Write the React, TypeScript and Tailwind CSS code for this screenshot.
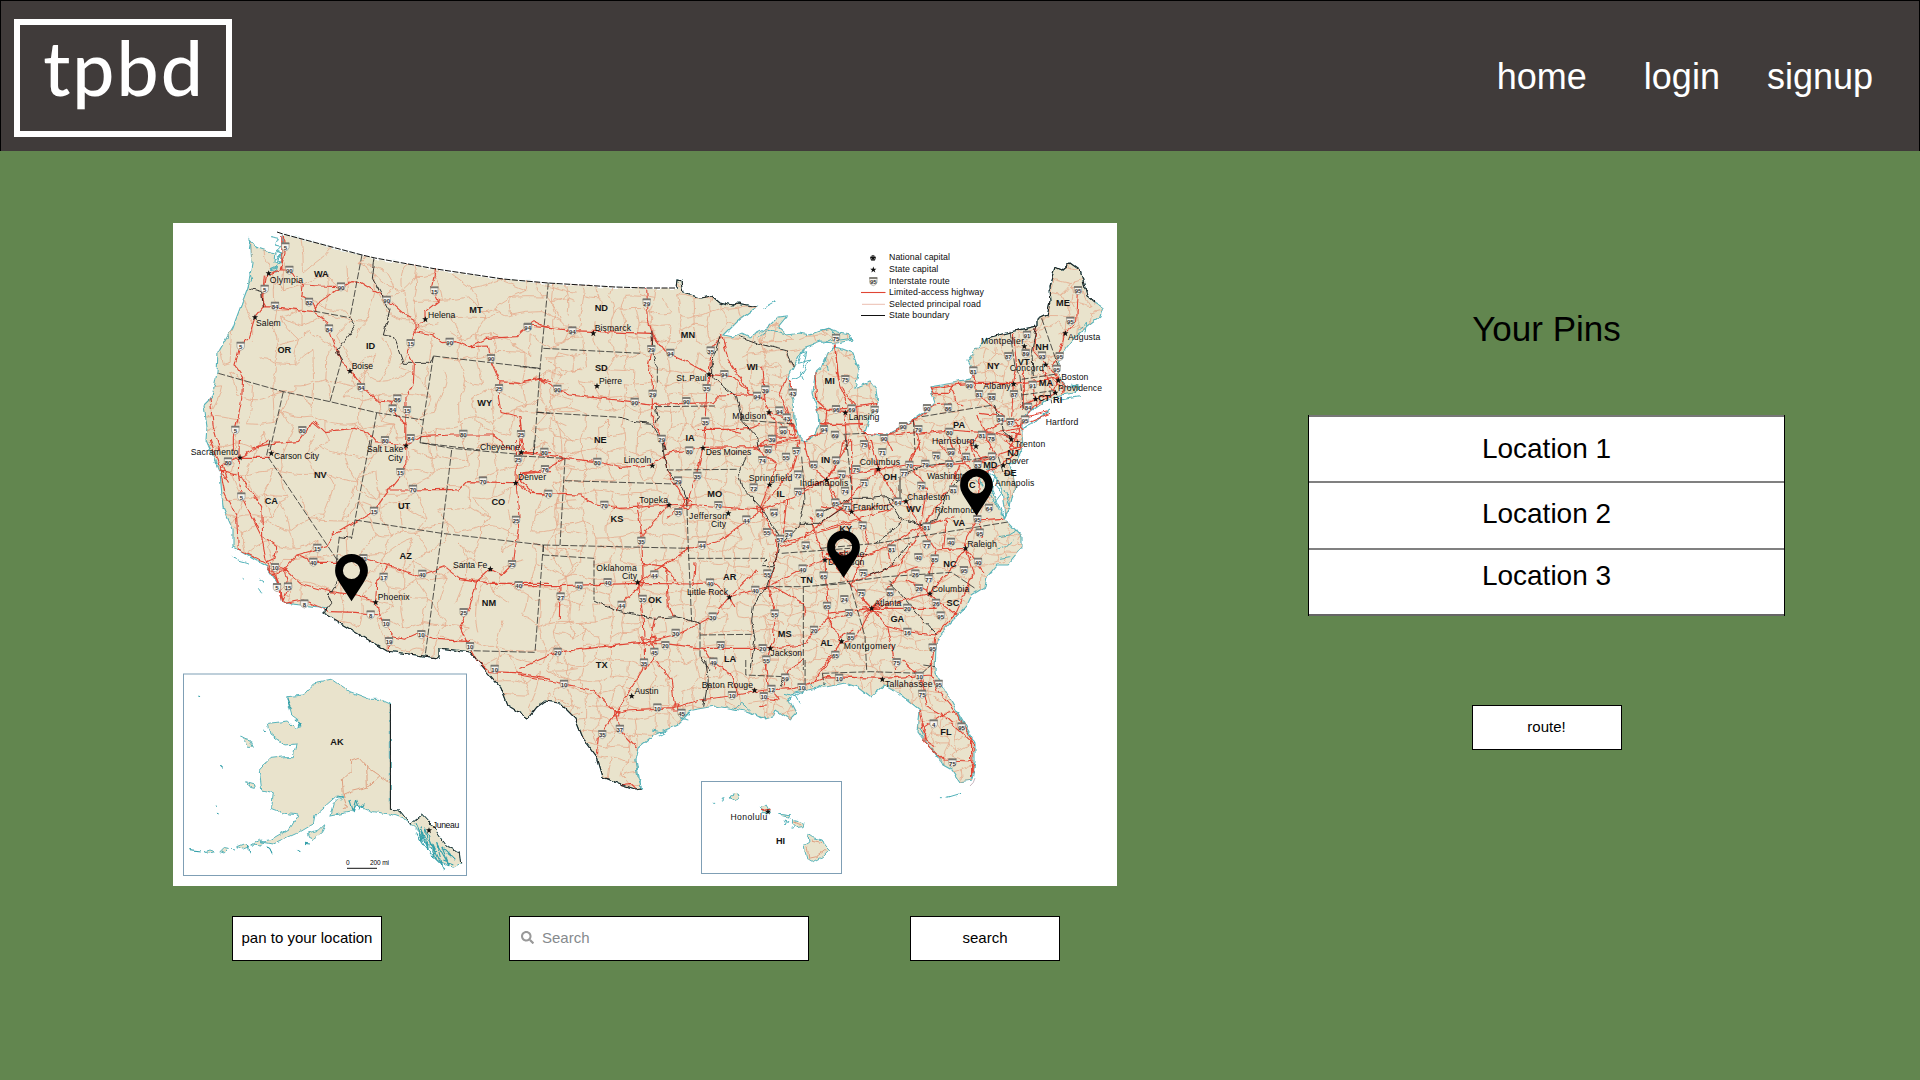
import React from "react";
import { FaSearch } from "react-icons/fa";

type Tile = { x: number; y: number; sx: number };

// The map is drawn in tiles; each has its own origin and horizontal scale.
const tiles: Record<string, Tile> = {
  A: { x: 170, y: 220, sx: 3 },
  B: { x: 520, y: 220, sx: 3 },
  C: { x: 820, y: 220, sx: 3 },
  D: { x: 170, y: 440, sx: 3 },
  E: { x: 520, y: 440, sx: 3 },
  F: { x: 820, y: 440, sx: 3 },
  G: { x: 170, y: 660, sx: 3 },
  H: { x: 520, y: 660, sx: 2.6133 },
};

const px = (t: string, x: number) => tiles[t].x + x / tiles[t].sx;
const py = (t: string, y: number) => tiles[t].y + y / 3;

const land =
  "M250,239L258,248 270,252 276,253 275,263 280,262 282,250 283,234 362,255 375,258 436,269 503,279 548,283 615,287 647,288 676,288 677,280 681,281 683,293 700,298 712,296 720,303 732,306 738,303 758,307 750,312 737,322 724,335 733,337 742,333 750,337 767,328 778,317 787,316 778,327 787,335 800,333 810,335 828,328 840,333 850,335 852,340 837,343 820,342 803,348 797,360 788,378 793,400 794,420 798,435 803,441 813,438 819,425 818,413 813,393 815,373 822,367 828,353 833,347 840,348 853,353 859,370 855,388 862,385 870,382 876,390 878,403 870,417 867,427 865,433 883,437 900,428 913,420 927,410 935,402 930,387 953,383 970,380 975,373 968,360 975,350 987,338 1010,332 1037,326 1037,320 1047,315 1050,303 1049,287 1055,267 1062,270 1070,263 1080,270 1087,295 1095,302 1103,307 1100,317 1087,327 1077,335 1067,347 1060,357 1057,368 1060,378 1067,387 1077,385 1075,393 1060,395 1047,400 1033,410 1022,418 1022,433 1023,447 1017,460 1008,465 1013,473 1015,487 1010,507 1005,517 1002,490 995,477 993,470 989,469 992,490 1000,513 1008,522 1022,537 1022,548 1008,565 997,565 987,577 985,587 972,595 967,605 953,620 942,632 936,645 935,673 949,697 962,720 975,742 975,763 972,780 960,782 952,770 943,765 935,753 926,743 918,732 920,710 910,702 897,692 884,685 870,697 857,687 845,683 826,687 811,689 796,693 788,698 796,713 790,719 776,710 773,717 763,719 750,712 734,709 715,706 692,710 677,725 654,735 639,747 636,760 641,788 635,789 620,784 603,777 597,757 583,738 575,718 560,703 545,701 537,707 528,718 507,705 500,687 477,660 470,652 439,648 439,658 387,651 323,613 328,608 283,603 280,587 267,567 238,550 233,547 233,530 223,507 220,473 206,440 207,427 204,405 212,397 217,373 218,353 233,327 248,287 252,263Z";

const borderNorth =
  "M277,232L283,234 362,255 375,258 436,269 503,279 548,283 615,287 647,288 676,288";
const borderLakes = "M676,288L677,280 681,281 683,293 700,298 712,296 720,303 732,306 738,303 758,307";
const borderEast =
  "M987,338L1010,332 1037,326 1037,320 1047,315 1050,303 1049,287 1055,267 1062,270 1070,263 1080,270 1087,295 1095,302";
const borderSouth =
  "M641,788L635,789 620,784 603,777 597,757 583,738 575,718 560,703 545,701 537,707 528,718 507,705 500,687 477,660 470,652 439,648 439,658 387,651 323,613 328,608";

const highways: Record<string, string> = {
  A: "M340,45L345,100 330,150 290,165 283,205 280,260 255,292 235,355 208,385 195,435 218,470 215,540 203,600 190,650 190,690M330,150L360,150 375,175 400,195 450,198 515,200 545,185 570,187 650,235 700,280 735,298 735,335 790,345 815,368 860,365 895,380 955,378 965,430 990,485 1050,490 1105,478 1140,485M400,195L395,230 430,250 440,275M515,200L450,245 430,275M280,260L330,262 430,275 470,305 490,365 515,430 540,452 575,500 620,540 680,545M660,545L680,590 710,615M797,148L785,200 805,243 765,275 765,298 732,335 712,395 733,435 730,490 708,530 707,690M895,380L950,355 1040,350 1075,315 1140,322M990,485L985,530 993,577 1050,590 1055,640 1050,690M245,685L310,670 385,665 430,605 465,635 550,625 590,635 615,665 707,675 750,650 850,645 970,645 1020,690M120,535L130,620 150,690M335,45L336,150M283,170L277,240 288,262",
  B: "M0,335L45,305 75,320 150,332 395,340 435,395 500,425 567,463 640,470 690,520 735,540 747,577 790,590 830,640M380,204L385,300 400,345 385,440 397,490 397,600 430,660 435,690M0,488L60,475 100,505 150,525 340,545 400,553 580,548 600,525 720,520M605,348L575,385 567,463 560,520 550,690M605,345L625,420 690,520M725,440L735,540M800,470L780,520 800,580 830,640M805,480L822,520M530,628L620,628 660,640M835,650L720,680M740,577L768,600 768,690M885,460L890,540 920,570 915,630 860,660M943,375L960,500 985,560M890,570L985,565M895,610L990,615M0,600L10,690M855,665L855,690M620,628L690,622 720,610M780,610L825,650M800,560L825,650M700,688L760,650 830,655",
  C: "M45,370L55,480 75,520 110,560 175,550M0,565L75,575 110,560M75,578L80,690M110,560L115,620 135,640M0,615L130,610M135,640L190,645 290,635M190,655L300,590 340,555 390,550M330,505L400,495 450,490 580,490 630,485 700,475 715,480M460,455L470,520 555,590M395,500L410,550 430,555M580,340L590,440 580,490 575,590M650,320L640,390 680,435 710,470M775,215L770,300 735,340 720,390 700,440 715,480 700,520 640,560 600,620 570,690M610,450L610,570M555,590L480,580M290,640L390,630 520,640 600,625M440,690L480,640 560,600M520,640L575,655M330,500L340,520 385,520 400,495M560,610L620,590 680,575M580,620L640,600 690,580M605,600L590,650 600,690M640,500L650,560M670,450L690,500 710,520M190,640L215,690M135,645L150,690M280,600L300,690M380,630L400,690M470,585L500,640 510,690M700,460L740,500M690,470L720,500 730,520M600,560L640,540 700,520M580,600L610,630M560,640L600,640",
  D: "M208,0L205,100 215,170 275,290 290,370 320,420 335,470 340,490M145,90L200,105M210,105L240,150 275,200 278,290 320,320 315,355 290,365M150,90L165,160 200,230 205,330 290,372M210,52L150,80M210,52L300,0M345,385L380,345 470,320 490,285 550,250 610,215 650,160 690,110 708,70 707,20M650,150L720,150 830,148 865,150 890,125 1040,128 1085,160 1140,163M380,345L430,367 500,367 580,355 660,378 745,408 825,380 870,415 960,430 1140,430M345,385L390,430 480,455 560,465 617,487 635,540 670,590 700,598 740,580 800,598 900,605M340,490L400,480 480,515 560,517 630,525M617,487L620,430 655,380M655,590L655,632M1040,0L1038,128 1048,240 1030,370 995,405 960,387 920,425 900,500 870,560 890,605 920,660 950,690M1040,128L1060,100 1140,95M1055,38L1140,38M305,390L345,390M340,380L355,440 340,480M120,0L150,85 175,130 160,75M490,270L490,290M290,365L350,390 310,405 290,380M305,375L330,440 340,485M210,52L300,52",
  E: "M0,100L70,90 135,55 230,65 300,82 395,75 440,40 505,30 550,22 700,20 840,0M0,38L135,55M0,120L45,160 180,165 220,190 300,205 445,195 500,192 720,210 800,180 920,120 990,110M550,22L530,100 500,190 440,235M350,190L365,280M445,195L365,285 370,430 300,495 290,520M355,430L370,540 375,690M355,430L400,395 510,325 600,300 720,215M0,437L120,437 355,430 515,432 580,428 628,470 745,440 850,385 915,360 985,330M628,470L580,530 480,580 385,605M0,685L110,637 230,622 385,605 550,625 750,625 850,615 880,580 925,535 990,525M390,600L410,640 375,690M390,600L405,530M120,437L118,540M745,440L765,520 760,600 750,625 735,690M720,210L770,290 770,350 745,440M840,0L815,90 720,210M700,20L770,70 750,130 720,205M920,120L870,80 850,0M920,120L945,190 990,230M920,120L970,40 990,0M435,380L450,400 475,430M440,390L445,500 460,530M525,370L520,440M790,310L850,290 990,250M870,230L900,320 915,360 920,480 925,535 965,605 910,690M760,440L850,490 855,530M435,40L440,90 500,190M550,625L590,690M780,320L830,305 950,215 990,180M628,470L645,505M628,470L710,390M365,370L440,380M365,600L410,590 390,620 360,590M490,180L515,185 512,205 492,205ZM710,202L735,205 730,218 712,216ZM800,180L790,280M835,150L920,120",
  F: "M20,120L100,100 175,88 260,75 320,80 430,70M175,88L110,150 50,215M175,88L150,0M175,88L215,150 235,185M260,75L300,0M95,215L235,185 260,185 300,260M300,0L270,70 320,150 300,260 350,330 330,390 320,460 410,525M430,70L530,45 610,20M430,70L480,110 470,240 440,290 435,325 400,380 330,460 155,505M300,260L200,320 130,350 20,340M300,260L400,230M420,75L390,140 330,230 240,370 90,430M15,345L90,430 155,505 20,520M155,505L110,590 65,605 0,690M155,505L200,560 230,690M155,505L350,505M330,460L260,420M200,560L260,575 345,585M435,325L495,400M435,325L460,400 400,530 345,585 335,690M350,330L435,325M25,535L65,605M470,240L550,235M95,215L130,250 145,310 95,430M95,0L95,215M500,0L530,45M480,110L560,60 610,20M410,0L430,70M480,240L485,290M0,200L95,215M0,270L120,235 220,205M20,120L60,190 95,215M20,120L60,50 70,0M350,0L400,60M440,0L490,60M120,470L155,505 190,470M130,520L180,490M130,500L185,520M60,590L100,570M200,450L240,400 290,380M450,0L470,70 530,50M380,240L370,330M200,320L215,380 240,370M560,0L590,30",
  G: "M920,0L960,35 1035,38 1140,55",
  H: "M0,45L90,65 190,90 250,160 280,150 400,143 470,120 550,108 640,90 720,85 800,50 950,55 1075,45M250,160L320,30 325,0M250,160L205,230 200,280M250,160L260,210 305,265M405,143L395,60 355,0M570,105L550,40 500,0M660,95L680,120 640,115M640,0L650,90M740,0L700,30 690,80M1075,45L1090,90 1140,160 1185,250 1183,340M1000,0L1050,60 1065,140 1105,165 1060,200 1055,245 1105,300 1180,303M1105,165L1180,245 1180,350M765,70L810,0M1075,0L1075,45M1045,150L1055,200M1105,165L1135,155M265,375L290,370 305,388M245,155L258,155 258,168 245,168ZM400,135L412,135 412,150 400,150ZM1100,155L1110,170M1050,190L1060,240 1085,260M1176,300L1186,320M625,140L645,138M630,452L652,448",
};

const boundaries: Record<string, string> = {
  A: "M430,273L540,293M576,104L540,293M340,515L300,690M145,460L340,515 480,545 620,578 760,600M620,578L600,690M790,408L750,668 930,690M790,408L1110,445M1135,188L1110,445 1093,690M515,420L480,545M1100,577L1140,580",
  B: "M70,385L365,400M0,440L62,446M412,440L412,490M405,560L585,558M52,577L300,592M665,600L825,612",
  C: "M305,590L520,555M280,600L285,690M570,335L585,440 600,470 610,570M665,295L715,440M605,478L710,462M605,525L700,512M690,512L695,550M70,643L135,640M75,645L80,690",
  D: "M300,0L290,45 500,358M600,0L555,240 545,295M508,290L500,358M555,240L815,280 1120,315M845,30L815,280 765,650M750,8L845,25 1050,43M1093,0L1090,45",
  E: "M0,48L135,55 120,315M135,122L465,132M440,90L650,88M500,180L505,325 515,545M540,550L540,650M70,315L505,325M70,315L70,345 222,355 222,480M505,355L735,355M540,585L695,583M70,315L45,637 -150,632M740,440L850,440 850,690M850,440L990,430M845,50L855,180M785,340L990,325",
  F: "M80,0L95,150M300,80L520,50M170,310L570,245M0,325L170,310M0,435L200,410 395,397 465,445M90,432L135,590 140,690M535,50L550,100 580,105M310,675L345,680",
  H: "M590,0L590,45 690,50M745,0L745,90M790,40L915,35 1050,40 1075,15M790,40L795,75",
};

const rivers: Record<string, string> = {
  A: "M238,205L275,215 280,262M540,293L555,320 500,395 515,420M615,114L607,175 660,270 640,345 670,350 700,430 780,430 790,408",
  B: "M395,330L400,410 410,440M300,592L345,605 395,610 425,660 435,690M405,560L412,590 405,610M600,348L575,430 575,470 650,530 665,600 710,650 715,690M660,350L730,375 800,392 820,440",
  C: "M520,555L545,600 550,640 575,660M650,320L635,390 640,470",
  D: "M545,295L508,290M500,358L505,420 475,465 485,490 465,515",
  E: "M425,0L440,90 490,145 500,180M222,480L280,510 400,535 470,530 540,550M740,360L730,380 765,380M680,50L655,100 665,140 725,205 780,290 770,350 740,440 700,500 695,540 705,600 690,690M855,180L840,250 790,310M840,250L900,250 990,190M540,650L570,690",
  F: "M95,175L150,175 200,170 240,190M240,235L200,170M240,110L300,80M240,190L240,110M240,235L310,255 350,240 385,150 440,100M170,310L250,240M270,310L210,380 150,405M205,425L240,460 300,530 350,585M0,220L40,200 95,175",
  H: "M485,0L492,60 480,140M690,50L680,80",
  G: "M661,448L690,450 722,490 755,462 790,500 830,560 868,575 872,610",
};

const coastBits: Record<string, string> = {
  A: "M300,50L325,55 315,75 335,80 320,95 338,100 322,110 340,115 325,130 320,145 300,150 325,155M318,90L330,100 320,120 335,125M305,148L322,140 318,158M238,150L245,180 235,200M243,60L238,90",
  B: "M730,265L765,245M715,350L740,330 800,345M850,385L835,430 870,420 840,470 815,480M905,440L915,410 925,450M840,400L860,395 850,440M850,480L840,455",
  C: "M0,330L30,325 60,360 95,355M10,370L50,350M775,330L800,310 795,340M755,495L775,500 765,520M720,540L780,530M610,625L690,570 640,610Z",
  D: "M185,352L210,362 240,370M218,415L222,418M268,420L285,430M265,445L275,460",
  F: "M530,140L545,160 530,180 550,230 570,200 555,150M535,290L565,285 590,270M530,330L560,320 580,300M540,355L570,350M500,90L525,110 510,160 530,200M480,110L490,140 470,120",
  H: "M440,160L420,175 440,180M345,210L380,218 360,230M300,300L310,360 318,385M560,145L580,130 600,150M625,170L640,175M690,100L720,110 730,130M700,120L740,95M755,70L770,90 800,70M1140,150L1160,200 1188,245M1075,260L1090,290M1045,200L1055,230M1100,413L1105,413M1115,412L1150,400M505,433L510,433M525,425L530,412 536,410 531,422ZM675,463L708,468M690,480L695,492 700,485ZM710,505L718,502",
};

const alaskaCoast =
  "M85,108L90,110M280,210L288,213M148,315L158,325M138,435L143,440M140,460L146,462M55,572L95,576M235,555L240,580M290,560L310,580M380,568L388,572M405,550L420,552M375,180L390,190 380,200M540,420L550,455 560,420 570,450 580,430M500,405L520,410 510,420M735,490L760,545 750,500 775,570 765,500 800,600 780,540 820,625 800,550 840,620 815,560 855,600 830,580M740,520L765,560 790,590 825,625M780,560L800,575 790,590M820,600L850,612M350,115L365,150";

const alaska =
  "M350,110L400,105 430,72 490,60 540,95 600,118 630,118 661,132 661,448 690,450 722,490 755,462 790,500 830,560 868,575 872,610 850,622 800,600 780,560 740,510 710,480 660,462 610,455 560,435 545,455 480,468 490,430 515,405 495,412 435,465 430,490 380,520 310,552 270,545 300,540 360,505 385,465 345,460 305,445 310,398 275,390 268,330 300,295 345,290 370,290 378,252 345,255 303,225 295,190 355,183 375,205 390,200 385,180 365,165ZM212,228L225,235 240,240 250,262 235,262 228,245ZM230,365L255,372 250,385 238,382ZM415,520L445,510 465,490 455,520 425,542ZM200,560L225,550 240,560 220,568ZM245,555L270,540 290,545 270,558ZM150,575L160,565 175,568 165,580ZM180,568L195,570M105,575L120,570 135,575 115,580Z";

const hawaii =
  "M550,405L565,400 574,405 570,417 560,422 550,415ZM628,440L642,433 650,448 655,458 635,458ZM680,463L708,468 700,474 685,470ZM712,478L725,482 742,490 740,500 725,503 712,490ZM752,523L765,533 790,540 795,555 807,570 790,590 765,605 750,595 745,575 742,553 755,543Z";

// Deterministic pseudo-random value in [0, 1).
const noise = (i: number, j: number, k: number) => {
  const v = Math.sin(i * 127.1 + j * 311.7 + k * 74.7) * 43758.5453;
  return v - Math.floor(v);
};

function roadMesh(x0: number, x1: number, y0: number, y1: number, step: number, jitter: number, keep: number) {
  const pt = (i: number, j: number): [number, number] => [
    x0 + i * step + (noise(i, j, step) - 0.5) * step * jitter,
    y0 + j * step + (noise(i, j, step + 5) - 0.5) * step * jitter,
  ];
  let d = "";
  const cols = Math.ceil((x1 - x0) / step);
  const rows = Math.ceil((y1 - y0) / step);
  for (let i = 0; i < cols; i++) {
    for (let j = 0; j < rows; j++) {
      const a = pt(i, j);
      [pt(i + 1, j), pt(i, j + 1)].forEach((b, n) => {
        if (noise(i, j, 20 + n) > keep) return;
        const bend = (noise(i, j, 40 + n) - 0.5) * step * 0.5;
        const mx = (a[0] + b[0]) / 2 + (n ? bend : 0);
        const my = (a[1] + b[1]) / 2 + (n ? 0 : bend);
        d += `M${a[0].toFixed(1)},${a[1].toFixed(1)}Q${mx.toFixed(1)},${my.toFixed(1)} ${b[0].toFixed(1)},${b[1].toFixed(1)}`;
      });
    }
  }
  return d;
}

const minorRoads =
  roadMesh(195, 560, 225, 725, 19, 1.1, 0.72) +
  roadMesh(555, 770, 270, 800, 14, 0.7, 0.78) +
  roadMesh(765, 1110, 255, 790, 12, 0.95, 0.76);

const states: [string, string, number, number][] = [
  ["WA", "A", 454, 170], ["OR", "A", 343, 400], ["ID", "A", 602, 387], ["MT", "A", 918, 279], ["WY", "A", 944, 558],
  ["ND", "B", 244, 273], ["SD", "B", 244, 452], ["MN", "B", 504, 354], ["WI", "B", 697, 450], ["NE", "B", 241, 669], ["IA", "B", 510, 663], ["MI", "B", 929, 492],
  ["ME", "C", 729, 257], ["NY", "C", 520, 448], ["NH", "C", 666, 390], ["VT", "C", 611, 434], ["MA", "C", 678, 497], ["CT", "C", 672, 543], ["RI", "C", 713, 549], ["PA", "C", 417, 623],
  ["NV", "D", 451, 114], ["CA", "D", 304, 191], ["UT", "D", 702, 208], ["CO", "D", 985, 196], ["AZ", "D", 707, 357], ["NM", "D", 957, 498],
  ["KS", "E", 291, 245], ["MO", "E", 584, 171], ["IL", "E", 782, 171], ["IN", "E", 917, 69], ["AR", "E", 629, 421], ["OK", "E", 405, 489], ["TN", "E", 860, 428], ["MS", "E", 794, 591], ["AL", "E", 919, 617], ["LA", "E", 630, 666], ["TX", "E", 245, 685],
  ["OH", "F", 210, 120], ["WV", "F", 281, 217], ["VA", "F", 417, 257], ["KY", "F", 77, 276], ["NC", "F", 390, 380], ["SC", "F", 399, 498], ["GA", "F", 232, 547], ["NJ", "F", 579, 48], ["MD", "F", 511, 85], ["DE", "F", 571, 109],
  ["FL", "H", 1113, 225], ["HI", "H", 681, 552], ["AK", "G", 501, 254],
];

// label, tile, left, right, baseline
const cities: [string, string, number, number, number][] = [
  ["Olympia", "A", 299, 399, 190], ["Salem", "A", 258, 332, 318], ["Helena", "A", 774, 856, 294], ["Boise", "A", 545, 609, 447],
  ["Bismarck", "B", 224, 333, 332], ["Pierre", "B", 237, 306, 492], ["St. Paul", "B", 469, 560, 483], ["Madison", "B", 637, 739, 596],
  ["Lansing", "C", 86, 178, 600], ["Augusta", "C", 744, 841, 359], ["Montpelier", "C", 483, 612, 373], ["Concord", "C", 569, 671, 453], ["Boston", "C", 724, 805, 479], ["Providence", "C", 714, 846, 513], ["Albany", "C", 490, 572, 507], ["Hartford", "C", 677, 775, 615], ["Harrisburg", "C", 336, 463, 672],
  ["Sacramento", "D", 62, 205, 46], ["Carson City", "D", 312, 447, 56], ["Salt Lake", "D", 591, 700, 36], ["City", "D", 654, 699, 62], ["Cheyenne", "D", 930, 1050, 29], ["Santa Fe", "D", 849, 952, 384], ["Phoenix", "D", 623, 719, 481],
  ["Denver", "D", 1044, 1128, 121], ["Lincoln", "E", 311, 394, 70], ["Des Moines", "E", 557, 694, 44], ["Topeka", "E", 358, 444, 188], ["Jefferson", "E", 507, 621, 236], ["City", "E", 573, 618, 261], ["Springfield", "E", 686, 817, 123], ["Indianapolis", "E", 839, 985, 138], ["Oklahoma", "E", 229, 350, 393], ["City", "E", 306, 351, 418], ["Little Rock", "E", 501, 624, 465], ["Jackson", "E", 751, 846, 647],
  ["Columbus", "F", 119, 240, 75], ["Trenton", "F", 584, 676, 20], ["Dover", "F", 556, 626, 72], ["Washington", "F", 321, 455, 116], ["Annapolis", "F", 525, 643, 139], ["Charleston", "F", 261, 390, 179], ["Frankfort", "F", 98, 206, 209], ["Richmond", "F", 344, 465, 220], ["Raleigh", "F", 442, 530, 320], ["Nashville-", "F", 24, 142, 351], ["Davidson", "F", 24, 133, 376], ["Columbia", "F", 335, 448, 456], ["Atlanta", "F", 163, 244, 497], ["Montgomery", "F", 71, 227, 627],
  ["Austin", "H", 299, 362, 101], ["Baton Rouge", "H", 475, 609, 85], ["Tallahassee", "H", 954, 1078, 80], ["Honolulu", "H", 550, 646, 479], ["Juneau", "G", 788, 868, 503],
];

const stars: [string, number, number][] = [
  ["A", 296, 160], ["A", 255, 292], ["A", 766, 298], ["A", 540, 453], ["B", 220, 340], ["B", 231, 498], ["B", 567, 463], ["B", 747, 577],
  ["C", 76, 578], ["C", 736, 340], ["C", 613, 379], ["C", 677, 434], ["C", 715, 481], ["C", 706, 518], ["C", 581, 492], ["C", 647, 537], ["C", 574, 658], ["C", 468, 679],
  ["D", 210, 53], ["D", 304, 40], ["D", 708, 17], ["D", 1054, 37], ["D", 1037, 129], ["D", 961, 387], ["D", 617, 487],
  ["E", 397, 77], ["E", 549, 24], ["E", 447, 195], ["E", 625, 220], ["E", 749, 134], ["E", 920, 120], ["E", 353, 427], ["E", 628, 472], ["E", 751, 625], ["E", 915, 360], ["E", 965, 604],
  ["F", 175, 87], ["F", 550, 76], ["F", 258, 184], ["F", 95, 215], ["F", 437, 325], ["F", 330, 461], ["F", 155, 505], ["H", 292, 108], ["H", 613, 91], ["H", 947, 58], ["H", 648, 455], ["G", 777, 511], ["C", 160, 149],
];

const shields: [string, number, number, string][] = [
  ["A", 346, 80, "5"], ["A", 358, 150, "90"], ["A", 284, 207, "5"], ["A", 315, 258, "84"], ["A", 417, 246, "82"], ["A", 513, 200, "90"], ["A", 650, 240, "90"], ["A", 793, 212, "15"], ["A", 477, 326, "84"], ["A", 212, 378, "5"], ["A", 722, 370, "15"], ["A", 839, 366, "90"], ["A", 1074, 321, "94"], ["A", 963, 415, "90"], ["A", 987, 505, "25"], ["A", 573, 502, "84"], ["A", 682, 536, "86"], ["A", 668, 566, "84"], ["A", 711, 571, "15"], ["A", 196, 630, "5"], ["A", 397, 631, "80"], ["A", 645, 661, "80"], ["A", 722, 655, "84"], ["A", 880, 642, "80"], ["A", 1053, 643, "25"],
  ["B", 23, 322, "94"], ["B", 157, 332, "94"], ["B", 380, 248, "29"], ["B", 394, 388, "29"], ["B", 451, 399, "94"], ["B", 572, 392, "35"], ["B", 613, 463, "94"], ["B", 560, 505, "35"], ["B", 112, 507, "90"], ["B", 398, 522, "29"], ["B", 344, 546, "90"], ["B", 499, 544, "90"], ["B", 711, 528, "94"], ["B", 736, 509, "39"], ["B", 818, 519, "43"], ["B", 778, 572, "94"], ["B", 800, 593, "43"], ["B", 556, 605, "35"], ["B", 425, 657, "29"], ["B", 790, 632, "90"], ["B", 756, 657, "39"], ["B", 912, 628, "94"], ["B", 945, 645, "69"], ["B", 976, 478, "75"], ["B", 948, 568, "96"],
  ["C", 48, 354, "75"], ["C", 95, 566, "69"], ["C", 164, 570, "94"], ["C", 192, 655, "90"], ["C", 132, 673, "75"], ["C", 249, 619, "90"], ["C", 295, 628, "79"], ["C", 321, 565, "90"], ["C", 384, 563, "86"], ["C", 388, 636, "80"], ["C", 448, 495, "90"], ["C", 460, 452, "81"], ["C", 477, 523, "81"], ["C", 515, 532, "88"], ["C", 582, 523, "87"], ["C", 565, 409, "87"], ["C", 621, 345, "91"], ["C", 617, 400, "89"], ["C", 666, 407, "93"], ["C", 719, 409, "95"], ["C", 774, 211, "95"], ["C", 751, 303, "95"], ["C", 638, 495, "91"], ["C", 624, 561, "84"], ["C", 541, 598, "84"], ["C", 571, 607, "87"], ["C", 615, 599, "95"], ["C", 486, 645, "81"], ["C", 514, 653, "78"], ["C", 710, 447, "95"],
  ["D", 174, 65, "80"], ["D", 214, 170, "5"], ["D", 442, 324, "15"], ["D", 430, 366, "40"], ["D", 315, 382, "10"], ["D", 321, 442, "5"], ["D", 354, 440, "15"], ["D", 403, 491, "8"], ["D", 612, 213, "15"], ["D", 691, 97, "15"], ["D", 729, 147, "70"], ["D", 939, 122, "70"], ["D", 1125, 88, "76"], ["D", 1044, 58, "25"], ["D", 1038, 240, "25"], ["D", 1026, 373, "25"], ["D", 1046, 436, "40"], ["D", 757, 402, "40"], ["D", 641, 411, "17"], ["D", 602, 524, "8"], ["D", 648, 550, "10"], ["D", 657, 604, "19"], ["D", 754, 583, "10"], ["D", 881, 517, "25"], ["D", 900, 619, "10"], ["D", 580, 355, "40"],
  ["E", 73, 36, "80"], ["E", 232, 66, "80"], ["E", 85, 162, "70"], ["E", 253, 195, "70"], ["E", 364, 303, "35"], ["E", 474, 122, "29"], ["E", 532, 108, "35"], ["E", 508, 32, "80"], ["E", 475, 217, "35"], ["E", 595, 196, "70"], ["E", 546, 316, "44"], ["E", 679, 239, "44"], ["E", 727, 61, "74"], ["E", 744, 30, "80"], ["E", 798, 51, "55"], ["E", 829, 34, "57"], ["E", 701, 143, "72"], ["E", 834, 104, "72"], ["E", 834, 156, "70"], ["E", 762, 219, "64"], ["E", 741, 277, "55"], ["E", 780, 297, "57"], ["E", 806, 283, "24"], ["E", 899, 221, "64"], ["E", 857, 317, "24"], ["E", 848, 386, "40"], ["E", 742, 401, "55"], ["E", 881, 75, "65"], ["E", 948, 62, "69"], ["E", 965, 104, "70"], ["E", 946, 188, "65"], ["E", 403, 404, "44"], ["E", 263, 427, "40"], ["E", 177, 438, "40"], ["E", 122, 470, "27"], ["E", 368, 477, "35"], ["E", 305, 495, "44"], ["E", 570, 428, "40"], ["E", 706, 450, "40"], ["E", 764, 521, "55"], ["E", 578, 530, "30"], ["E", 467, 579, "30"], ["E", 436, 616, "20"], ["E", 403, 636, "45"], ["E", 372, 668, "35"], ["E", 113, 636, "20"], ["E", 602, 616, "20"], ["E", 580, 665, "49"], ["E", 728, 625, "20"], ["E", 739, 659, "55"], ["E", 882, 570, "20"], ["E", 921, 498, "65"], ["E", 911, 407, "65"], ["E", 973, 478, "24"], ["E", 946, 645, "65"],
  ["F", 75, 153, "74"], ["F", 109, 88, "75"], ["F", 133, 130, "71"], ["F", 187, 37, "71"], ["F", 252, 99, "77"], ["F", 268, 75, "70"], ["F", 316, 72, "79"], ["F", 349, 48, "76"], ["F", 393, 37, "99"], ["F", 388, 73, "68"], ["F", 438, 51, "81"], ["F", 473, 74, "83"], ["F", 516, 50, "95"], ["F", 304, 138, "79"], ["F", 400, 149, "81"], ["F", 233, 185, "64"], ["F", 82, 201, "71"], ["F", 128, 257, "75"], ["F", 320, 260, "81"], ["F", 320, 314, "77"], ["F", 215, 326, "81"], ["F", 295, 352, "40"], ["F", 344, 356, "85"], ["F", 393, 306, "40"], ["F", 472, 238, "95"], ["F", 507, 204, "64"], ["F", 479, 278, "95"], ["F", 474, 366, "40"], ["F", 432, 391, "95"], ["F", 286, 401, "26"], ["F", 326, 416, "77"], ["F", 297, 445, "26"], ["F", 210, 458, "85"], ["F", 124, 460, "75"], ["F", 130, 400, "75"], ["F", 87, 520, "20"], ["F", 262, 504, "20"], ["F", 348, 489, "26"], ["F", 362, 527, "95"], ["F", 262, 576, "16"], ["F", 338, 623, "95"], ["F", 230, 667, "75"], ["F", 92, 591, "85"],
  ["H", 115, 72, "10"], ["H", 215, 223, "35"], ["H", 261, 207, "37"], ["H", 359, 143, "10"], ["H", 422, 159, "45"], ["H", 554, 106, "10"], ["H", 637, 109, "10"], ["H", 657, 87, "12"], ["H", 693, 53, "59"], ["H", 736, 82, "10"], ["H", 834, 54, "10"], ["H", 1044, 48, "10"], ["H", 1051, 102, "75"], ["H", 1081, 191, "4"], ["H", 1154, 200, "95"], ["H", 1130, 308, "75"], ["H", 1094, 72, "95"], ["G", 974, 27, "10"], ["C", 160, 184, "95"],
];

const legend = ["National capital", "State capital", "Interstate route", "Limited-access highway", "Selected principal road", "State boundary"];
const legendWidth = [183, 148, 182, 285, 276, 181];
const pins: [number, number][] = [[351.5, 570.5], [843.5, 547], [976.5, 485]];

function Layer({ data, color, width, dash, fill = "none" }: { data: Record<string, string>; color: string; width: number; dash?: string; fill?: string }) {
  return (
    <>
      {Object.entries(data).map(([key, d]) => (
        <path
          key={key}
          d={d}
          transform={`translate(${tiles[key].x} ${tiles[key].y}) scale(${1 / tiles[key].sx} ${1 / 3})`}
          fill={fill}
          stroke={color}
          strokeWidth={width}
          strokeDasharray={dash}
          strokeLinejoin="round"
          vectorEffect="non-scaling-stroke"
        />
      ))}
    </>
  );
}

const Star = ({ x, y }: { x: number; y: number }) => (
  <path
    transform={`translate(${x} ${y})`}
    d="M0,-3.2L0.8,-1 3.1,-1 1.3,0.5 2,2.8 0,1.4 -2,2.8 -1.3,0.5 -3.1,-1 -0.8,-1Z"
    fill="#111"
  />
);

function UsMap() {
  return (
    <svg className="block h-[663px] w-[944px] bg-white" viewBox="173 223 944 663" fontFamily="'Liberation Sans', Arial, sans-serif">
      <defs>
        <clipPath id="land-clip">
          <path d={land} />
        </clipPath>
        <filter id="rough" filterUnits="userSpaceOnUse" x="173" y="223" width="944" height="663">
          <feTurbulence type="fractalNoise" baseFrequency="0.13" numOctaves="2" seed="4" />
          <feDisplacementMap in="SourceGraphic" scale="5" xChannelSelector="R" yChannelSelector="G" />
        </filter>
      </defs>

      <g filter="url(#rough)">
        <path d={land} fill="#e9e3cc" stroke="#58b4bb" strokeWidth="1.1" />
        <path d={borderNorth} fill="none" stroke="#ffffff" strokeWidth="1.8" />
        <g clipPath="url(#land-clip)">
          <path d={minorRoads} fill="none" stroke="#e5a587" strokeWidth="0.75" />
        </g>
        <Layer data={coastBits} color="#4fb0b8" width={1} />
        <Layer data={{ G: alaska, H: hawaii }} color="#58b4bb" width={1} fill="#e9e3cc" />
        <Layer data={{ G: alaskaCoast }} color="#35a0aa" width={1.1} />
        <Layer
          data={{
            G: "M520,405L517,360 543,335 545,300 565,292 590,320 630,347 661,368M590,320L592,382M517,405L545,393 592,382 630,347M520,405L530,440 522,450",
            H: "M750,560L755,595 775,590 800,568M760,540L790,548M715,485L735,495",
          }}
          color="#dc9878"
          width={0.9}
        />
        <Layer data={highways} color="#e04534" width={1.1} />
        <Layer data={rivers} color="#222" width={0.9} />
        <path d={borderLakes + borderSouth + borderEast} fill="none" stroke="#222" strokeWidth="1.1" />
      </g>
      <path d={borderNorth} fill="none" stroke="#111" strokeWidth="1" strokeDasharray="6 1.5" />
      <path d="M390.4,704V809.5" stroke="#111" strokeWidth="1" />
      <Layer data={boundaries} color="#2a2a28" width={0.8} dash="7 2" />

      <g fill="none" stroke="#7f9fb5">
        <rect x="183.5" y="674" width="283" height="201.5" />
        <rect x="701.5" y="781.5" width="140" height="92" />
      </g>
      <path d="M970,786Q974,783 975,778" fill="none" stroke="#b9a2ad" strokeWidth="0.8" />
      <path d="M347,868.3H377" stroke="#111" />
      <text x="346" y="865" fontSize="6.5">0</text>
      <text x="370" y="865" fontSize="6.5" textLength="19">200 mi</text>

      {shields.map(([t, x, y, n], i) => (
        <g key={i} transform={`translate(${px(t, x)} ${py(t, y)})`}>
          <path d="M-3.7,-3.6H3.7V1Q3.5,3.4 0,4.4Q-3.5,3.4 -3.7,1Z" fill="#f6f4ee" stroke="#8f8c82" strokeWidth="0.6" />
          <path d="M-4,-4.2H4V-2.4H-4Z" fill="#77756f" />
          <text y="3" textAnchor="middle" fontSize="6" fontWeight="700" fill="#333">{n}</text>
        </g>
      ))}
      {stars.map(([t, x, y], i) => <Star key={i} x={px(t, x)} y={py(t, y)} />)}
      {cities.map(([name, t, l, r, y]) => (
        <text key={name + l} x={px(t, l)} y={py(t, y)} fontSize="8.6" fill="#0c0c0c" textLength={(r - l) / tiles[t].sx} lengthAdjust="spacing">
          {name}
        </text>
      ))}
      {states.map(([name, t, x, y]) => (
        <text key={name} x={px(t, x)} y={py(t, y)} textAnchor="middle" fontSize="9.2" fontWeight="700" fill="#151515">
          {name}
        </text>
      ))}
      <text x="969" y="488" fontSize="9" fontWeight="700">C</text>

      {legend.map((label, i) => (
        <text key={label} x="889" y={260.3 + i * 11.6} fontSize="8.8" textLength={legendWidth[i] / 3} fill="#0c0c0c">
          {label}
        </text>
      ))}
      <Star x={873} y={258} />
      <circle cx="873" cy="258" r="2.4" fill="none" stroke="#111" strokeWidth="0.8" />
      <path d="M861,292.5H885.5" stroke="#e04534" strokeWidth="1.1" />
      <path d="M862,304.3H885" stroke="#e9b5a6" strokeWidth="0.9" />
      <path d="M861,315.5H885" stroke="#111" />

      {pins.map(([x, y]) => (
        <path
          key={x}
          transform={`translate(${x} ${y})`}
          fillRule="evenodd"
          d="M0,-16.4C9,-16.4 16.4,-9.3 16.4,0C16.4,5.2 14.2,8.4 12,12.2L0,30.8L-12,12.2C-14.2,8.4 -16.4,5.2 -16.4,0C-16.4,-9.3 -9,-16.4 0,-16.4ZM0,-8.6A8.6,8.6 0 1 0 0,8.6A8.6,8.6 0 1 0 0,-8.6Z"
        />
      ))}
    </svg>
  );
}

const boxButton = "flex h-[45px] w-[150px] items-center justify-center border border-black bg-white pb-[2px] text-[15px] leading-none whitespace-nowrap";

export default function App() {
  return (
    <div className="h-[1080px] w-[1920px] overflow-hidden bg-[#62864f] font-['Liberation_Sans',Arial,sans-serif] text-black">
      <header className="flex h-[151px] items-start justify-between border-x border-t border-black bg-[#403b3a] pt-[18px] pr-[46px] pl-[13px] text-white">
        <div className="flex h-[118px] w-[218px] justify-center border-[6px] border-white pl-[2px] font-['Lato',sans-serif] text-[75px] leading-[84px] font-medium tracking-[2px]">
          tpbd
        </div>
        <nav className="flex pt-[37px] text-[36px] leading-[42px]">
          <a className="mr-[57px]">home</a>
          <a className="mr-[47px]">login</a>
          <a>signup</a>
        </nav>
      </header>

      <main className="flex items-start pt-[72px] pl-[173px]">
        <section className="w-[944px]">
          <UsMap />
          <div className="flex items-center pt-[30px] pl-[59px]">
            <button className={boxButton}>pan to your location</button>
            <label className="ml-[127px] flex h-[45px] w-[300px] items-center border border-black bg-white pb-[2px] pl-[11px] text-[15px] text-[#868a8d]">
              <FaSearch className="mr-[8px] size-[13px] text-[#999]" />
              <span className="leading-none">Search</span>
            </label>
            <button className={`${boxButton} ml-[101px]`}>search</button>
          </div>
        </section>

        <section className="ml-[191px] flex w-[477px] flex-col items-center pt-[86px]">
          <h1 className="text-[35px] leading-[40px]">Your Pins</h1>
          <ul className="mt-[66px] w-full border-x border-x-black bg-white text-center text-[28px] leading-[32px]">
            <li className="h-[66px] border-t-2 border-[#777] pt-[16px]">Location 1</li>
            <li className="h-[67px] border-t-2 border-[#808080] pt-[15px]">Location 2</li>
            <li className="h-[68px] border-y-2 border-t-[#808080] border-b-[#666] pt-[10px]">Location 3</li>
          </ul>
          <button className={`${boxButton} mt-[89px]`}>route!</button>
        </section>
      </main>
    </div>
  );
}
